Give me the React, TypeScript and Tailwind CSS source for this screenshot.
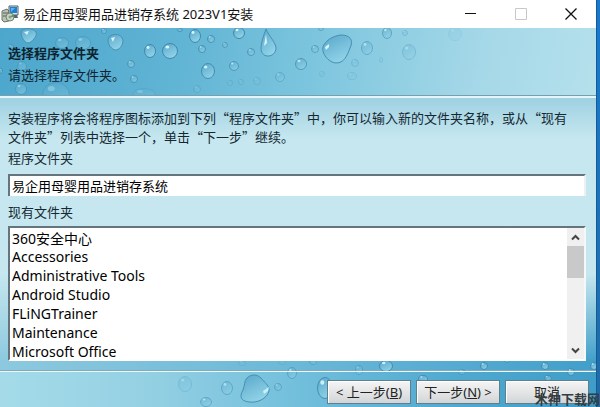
import { useRef, useState } from "react";

type Drop = { x: number; y: number; rx: number; ry: number; o: number };

const folders = [
  "360安全中心",
  "Accessories",
  "Administrative Tools",
  "Android Studio",
  "FLiNGTrainer",
  "Maintenance",
  "Microsoft Office",
];

const headerDrops: Drop[] = [
  { x: 62, y: 15, rx: 7, ry: 6, o: 0.4 },
  { x: 83, y: 15, rx: 8, ry: 7, o: 0.4 },
  { x: 11, y: 19, rx: 3, ry: 3, o: 0.5 },
  { x: 22, y: 38, rx: 5, ry: 5, o: 0.4 },
  { x: 104, y: 3, rx: 3, ry: 3, o: 0.6 },
  { x: 1, y: 43, rx: 2, ry: 3, o: 0.6 },
  { x: 21, y: 61, rx: 6, ry: 6, o: 0.5 },
  { x: 56, y: 67, rx: 14, ry: 13, o: 0.35 },
  { x: 150, y: 23, rx: 6, ry: 7, o: 1 },
  { x: 170, y: 23, rx: 8, ry: 8, o: 1 },
  { x: 180, y: 2, rx: 3, ry: 2, o: 0.7 },
  { x: 195, y: 8, rx: 6, ry: 7, o: 1 },
  { x: 211, y: 11, rx: 4, ry: 4, o: 0.8 },
  { x: 202, y: 21, rx: 4, ry: 4, o: 0.8 },
  { x: 225, y: 17, rx: 3, ry: 3, o: 0.6 },
  { x: 239, y: 5, rx: 6, ry: 6, o: 1 },
  { x: 251, y: 24, rx: 4, ry: 4, o: 0.7 },
  { x: 208, y: 43, rx: 7, ry: 8, o: 0.9 },
  { x: 234, y: 38, rx: 5, ry: 5, o: 0.7 },
  { x: 131, y: 36, rx: 4, ry: 4, o: 0.7 },
  { x: 134, y: 51, rx: 4, ry: 4, o: 0.7 },
  { x: 144, y: 67, rx: 12, ry: 7, o: 0.25 },
  { x: 197, y: 61, rx: 4, ry: 4, o: 0.3 },
  { x: 230, y: 55, rx: 3, ry: 3, o: 0.25 },
  { x: 241, y: 54, rx: 3, ry: 3, o: 0.25 },
  { x: 257, y: 53, rx: 4, ry: 4, o: 0.25 },
  { x: 280, y: 49, rx: 5, ry: 5, o: 0.4 },
  { x: 301, y: 36, rx: 6, ry: 6, o: 0.7 },
  { x: 315, y: 21, rx: 4, ry: 4, o: 0.6 },
  { x: 321, y: 1, rx: 3, ry: 2, o: 0.5 },
  { x: 367, y: 20, rx: 6, ry: 7, o: 0.5 },
  { x: 387, y: 5, rx: 5, ry: 6, o: 0.6 },
  { x: 405, y: 5, rx: 3, ry: 3, o: 0.3 },
  { x: 409, y: 24, rx: 7, ry: 8, o: 0.3 },
  { x: 355, y: 35, rx: 4, ry: 4, o: 0.3 },
  { x: 381, y: 32, rx: 2, ry: 3, o: 0.2 },
  { x: 352, y: 48, rx: 5, ry: 4, o: 0.2 },
  { x: 322, y: 46, rx: 3, ry: 3, o: 0.2 },
  { x: 455, y: 6, rx: 7, ry: 7, o: 0.12 },
];

const footerDrops: Drop[] = [
  { x: 185, y: 31, rx: 7, ry: 8, o: 0.25 },
  { x: 227, y: 35, rx: 6, ry: 7, o: 0.5 },
  { x: 206, y: 49, rx: 6, ry: 5, o: 0.5 },
  { x: 278, y: 34, rx: 4, ry: 4, o: 0.5 },
  { x: 242, y: 10, rx: 4, ry: 3, o: 0.2 },
  { x: 282, y: 9, rx: 4, ry: 3, o: 0.2 },
  { x: 292, y: 20, rx: 5, ry: 6, o: 0.5 },
  { x: 313, y: 9, rx: 4, ry: 3, o: 0.4 },
  { x: 359, y: 17, rx: 4, ry: 5, o: 0.4 },
  { x: 386, y: 13, rx: 7, ry: 6, o: 0.9 },
  { x: 462, y: 19, rx: 4, ry: 3, o: 0.5 },
  { x: 484, y: 13, rx: 4, ry: 4, o: 0.9 },
  { x: 507, y: 8, rx: 3, ry: 2, o: 0.5 },
  { x: 545, y: 13, rx: 4, ry: 4, o: 0.9 },
  { x: 571, y: 19, rx: 4, ry: 4, o: 0.8 },
  { x: 594, y: 13, rx: 4, ry: 4, o: 0.9 },
  { x: 548, y: 25, rx: 4, ry: 3, o: 0.7 },
  { x: 423, y: 26, rx: 5, ry: 4, o: 0.8 },
  { x: 325, y: 35, rx: 8, ry: 11, o: 0.9 },
];

const DropShape = ({ drop }: { drop: Drop }) => (
  <g opacity={drop.o}>
    <ellipse
      cx={drop.x}
      cy={drop.y}
      rx={drop.rx - 0.5}
      ry={drop.ry - 0.5}
      fill="url(#water)"
      stroke="#3f88ad"
    />
    <ellipse
      cx={drop.x - drop.rx / 3}
      cy={drop.y - drop.ry / 2}
      rx={drop.rx / 4}
      ry={drop.ry / 5}
      fill="#d8f4fc"
    />
  </g>
);

const HeaderArt = () => (
  <svg
    aria-hidden="true"
    className="pointer-events-none absolute top-0 left-0"
    width="480"
    height="67"
    viewBox="0 0 480 67"
  >
    <defs>
      <linearGradient id="water" x1="0" y1="0" x2="0.5" y2="1">
        <stop offset="0" stopColor="#58a7c9" />
        <stop offset="1" stopColor="#90d2e8" />
      </linearGradient>
    </defs>
    {headerDrops.map((drop, index) => (
      <DropShape key={index} drop={drop} />
    ))}
    <g fill="url(#water)" stroke="#468fb3">
      <path d="M22 2C25 0 33 0 36 4C38 8 31 15 28 15C24 15 19 6 22 2Z" />
      <path d="M110 8C115 5 121 6 123 12C123 18 119 22 115 22C110 21 105 12 110 8Z" />
      <path d="M266 1C269 8 276 15 276 20C276 25 272 28 268 28C263 28 261 24 261 20C261 14 264 7 266 1Z" />
      <path d="M323 19C325 13 332 8 341 7C350 7 354 12 350 20C347 28 344 35 336 35C329 35 321 25 323 19Z" />
    </g>
    <g fill="#d8f4fc">
      <path d="M24 4L29 3L27 7Z" />
      <path d="M111 10L115 9L113 14Z" />
      <path d="M266 6L267 15L264 18Z" />
      <path d="M325 19L329 16L329 19L326 22Z" />
    </g>
  </svg>
);

const FooterArt = () => (
  <svg
    aria-hidden="true"
    className="pointer-events-none absolute right-0 bottom-0"
    width="596"
    height="46"
    viewBox="0 8 596 46"
  >
    {footerDrops.map((drop, index) => (
      <DropShape key={index} drop={drop} />
    ))}
    <path
      d="M247 25C251 21 257 21 261 25C264 29 270 33 269 38C267 46 257 50 249 49C241 48 239 44 243 37C245 32 244 28 247 25Z"
      fill="url(#water)"
      stroke="#468fb3"
    />
    <path d="M263 38L269 34L268 38L264 41Z" fill="#c9effa" />
  </svg>
);

const SetupIcon = () => (
  <svg aria-hidden="true" width="18" height="18" viewBox="0 0 18 18">
    <path d="M1 6L6 4L8 6V16L3 17L1 15Z" fill="#b9c4b4" stroke="#6b7569" />
    <path d="M2 8H7M2 11H6" stroke="#566156" />
    <path d="M8 1H17V10H8Z" fill="#d9e2e8" stroke="#53616c" />
    <path d="M9 2H16V8H9Z" fill="#2181cc" />
    <path d="M10 3H14L10 7Z" fill="#58b8ee" />
    <path d="M11 10H16L17 13H11Z" fill="#59636b" />
    <circle cx="9" cy="12" r="4" fill="#c7d6bf" stroke="#738070" />
    <path d="M9 12L12 9A4 4 0 0 1 13 12Z" fill="#4fa46d" />
    <circle cx="9" cy="12" r="1" fill="#fff" stroke="#737d70" />
  </svg>
);

const wizardButton =
  "h-6 w-[84px] border border-[#5d7f8e] bg-linear-to-b from-[#f5f5f5] to-[#d2d5d7] text-[13px] leading-5 whitespace-nowrap text-[#222] shadow-[inset_1px_1px_0_#fff]";

const App = () => {
  const [folder, setFolder] = useState("易企用母婴用品进销存系统");
  const listRef = useRef<HTMLSelectElement>(null);

  const scrollList = (amount: number) => {
    listRef.current?.scrollBy({ top: amount });
  };

  return (
    <div className="relative flex min-h-screen w-full overflow-hidden bg-[#1b78bd] font-['Noto_Sans','Noto_Sans_CJK_SC',sans-serif] text-[13px] text-[#142832]">
      <div className="flex min-w-0 flex-1 flex-col bg-[#c6e7ef]">
        <div className="flex h-7 items-center bg-white pl-px text-[#111]">
          <SetupIcon />
          <h1 className="flex-1 pl-1 leading-5">易企用母婴用品进销存系统 2023V1安装</h1>
          <div className="flex">
            <button aria-label="最小化" className="flex h-7 w-[50px] items-center justify-center">
              <svg width="12" height="12" viewBox="0 0 12 12" stroke="#111">
                <path d="M0 5.5H11" />
              </svg>
            </button>
            <button
              aria-label="最大化"
              disabled
              className="flex h-7 w-[50px] items-center justify-center"
            >
              <svg width="12" height="12" viewBox="0 0 12 12" fill="none" stroke="#c8c8c8">
                <path d="M.5 .5H11.5V11.5H.5Z" />
              </svg>
            </button>
            <button aria-label="关闭" className="flex h-7 w-[50px] items-center justify-center">
              <svg width="12" height="12" viewBox="0 0 12 12" stroke="#111" strokeWidth="1.3">
                <path d="M.5 .5L11.5 11.5M11.5 .5L.5 11.5" />
              </svg>
            </button>
          </div>
        </div>

        <header className="relative h-[68px] border-b border-[#779fae] bg-linear-[100deg,#4da6cc_0%,#60b4d4_30%,#80c7df_55%,#a5d8e8_80%,#b5e0ec_100%] pt-[15px] pl-2">
          <HeaderArt />
          <div className="relative text-[#0d2430]">
            <h2 className="leading-5 font-bold">选择程序文件夹</h2>
            <p className="pt-0.5 leading-5">请选择程序文件夹。</p>
          </div>
        </header>

        <main className="relative flex-1 border-t-2 border-[#e5f5f9] bg-linear-to-b from-[#9ed1e2] via-[#c6e7ef] via-15% to-[#c6e7ef] px-2 pt-2.5 pr-2.5">
          <div className="absolute inset-x-0 bottom-0 h-24 bg-linear-to-r from-[#8cc9de] via-[#6bb8d7] via-50% to-[#419fca] mask-t-from-10%" />
          <div className="relative">
            <p className="pr-3 font-['Noto_Sans_CJK_SC',sans-serif] leading-[19px]">
              安装程序将会将程序图标添加到下列“程序文件夹”中，你可以输入新的文件夹名称，或从“现有文件夹”列表中选择一个，单击“下一步”继续。
            </p>
            <label htmlFor="folder" className="block pt-0.5 leading-5">
              程序文件夹
            </label>
            <input
              id="folder"
              type="text"
              value={folder}
              className="mt-1.5 block h-[22px] w-full border-t-2 border-r-2 border-l-2 border-t-[#66757d] border-r-[#ecf1f2] border-l-[#66757d] bg-white px-0.5 pb-0.5 leading-[18px] text-black outline-none"
              onChange={(event) => setFolder(event.target.value)}
            />
            <label htmlFor="folders" className="block pt-1.5 leading-5">
              现有文件夹
            </label>
            <div className="mt-1 flex h-[135px] border-2 border-t-[#66757d] border-r-[#f4f8f9] border-b-white border-l-[#66757d] bg-white">
              <select
                id="folders"
                ref={listRef}
                size={7}
                className="h-full min-w-0 flex-1 appearance-none overflow-hidden text-sm text-black outline-none"
                onChange={(event) => setFolder(event.target.value)}
              >
                {folders.map((name) => (
                  <option
                    key={name}
                    value={name}
                    className="h-[19px] min-h-0 px-0.5 py-0 leading-4"
                  >
                    {name}
                  </option>
                ))}
              </select>
              <div className="flex w-[17px] flex-col bg-[#f0f0f0]">
                <button
                  aria-label="向上滚动"
                  className="flex h-[18px] items-center justify-center"
                  onClick={() => scrollList(-19)}
                >
                  <svg width="9" height="7" viewBox="0 0 9 7" fill="none" stroke="#444" strokeWidth="2">
                    <path d="M1 5.5L4.5 2L8 5.5" />
                  </svg>
                </button>
                <div className="h-8 bg-[#c9c9c9]" />
                <button
                  aria-label="向下滚动"
                  className="mt-auto flex h-[18px] items-center justify-center"
                  onClick={() => scrollList(19)}
                >
                  <svg width="9" height="7" viewBox="0 0 9 7" fill="none" stroke="#444" strokeWidth="2">
                    <path d="M1 1.5L4.5 5L8 1.5" />
                  </svg>
                </button>
              </div>
            </div>
          </div>
        </main>

        <footer className="relative flex h-[37px] justify-end gap-[5px] border-t border-[#84a9b8] bg-linear-[90deg,#a5dbe9_0%,#94d0e3_25%,#72bfdc_50%,#51aad0_75%,#3e9dc8_100%] pr-[7px] pt-[9px]">
          <FooterArt />
          <div className="absolute inset-x-0 top-0 h-px bg-[#e9f7fb]" />
          <button className={`relative ${wizardButton}`}>
            &lt; 上一步(<u>B</u>)
          </button>
          <button className={`relative ${wizardButton}`}>
            下一步(<u>N</u>) &gt;
          </button>
          <button className={`relative ${wizardButton}`}>取消</button>
        </footer>
      </div>
      <div className="w-1 border-l border-[#155c93] bg-linear-to-b from-[#1879d0] to-[#1f6ba6]" />
      <span className="pointer-events-none absolute right-0 bottom-0 text-[13px] leading-4 font-bold text-[#333d43]">
        木神下载网
      </span>
    </div>
  );
};

export default App;
